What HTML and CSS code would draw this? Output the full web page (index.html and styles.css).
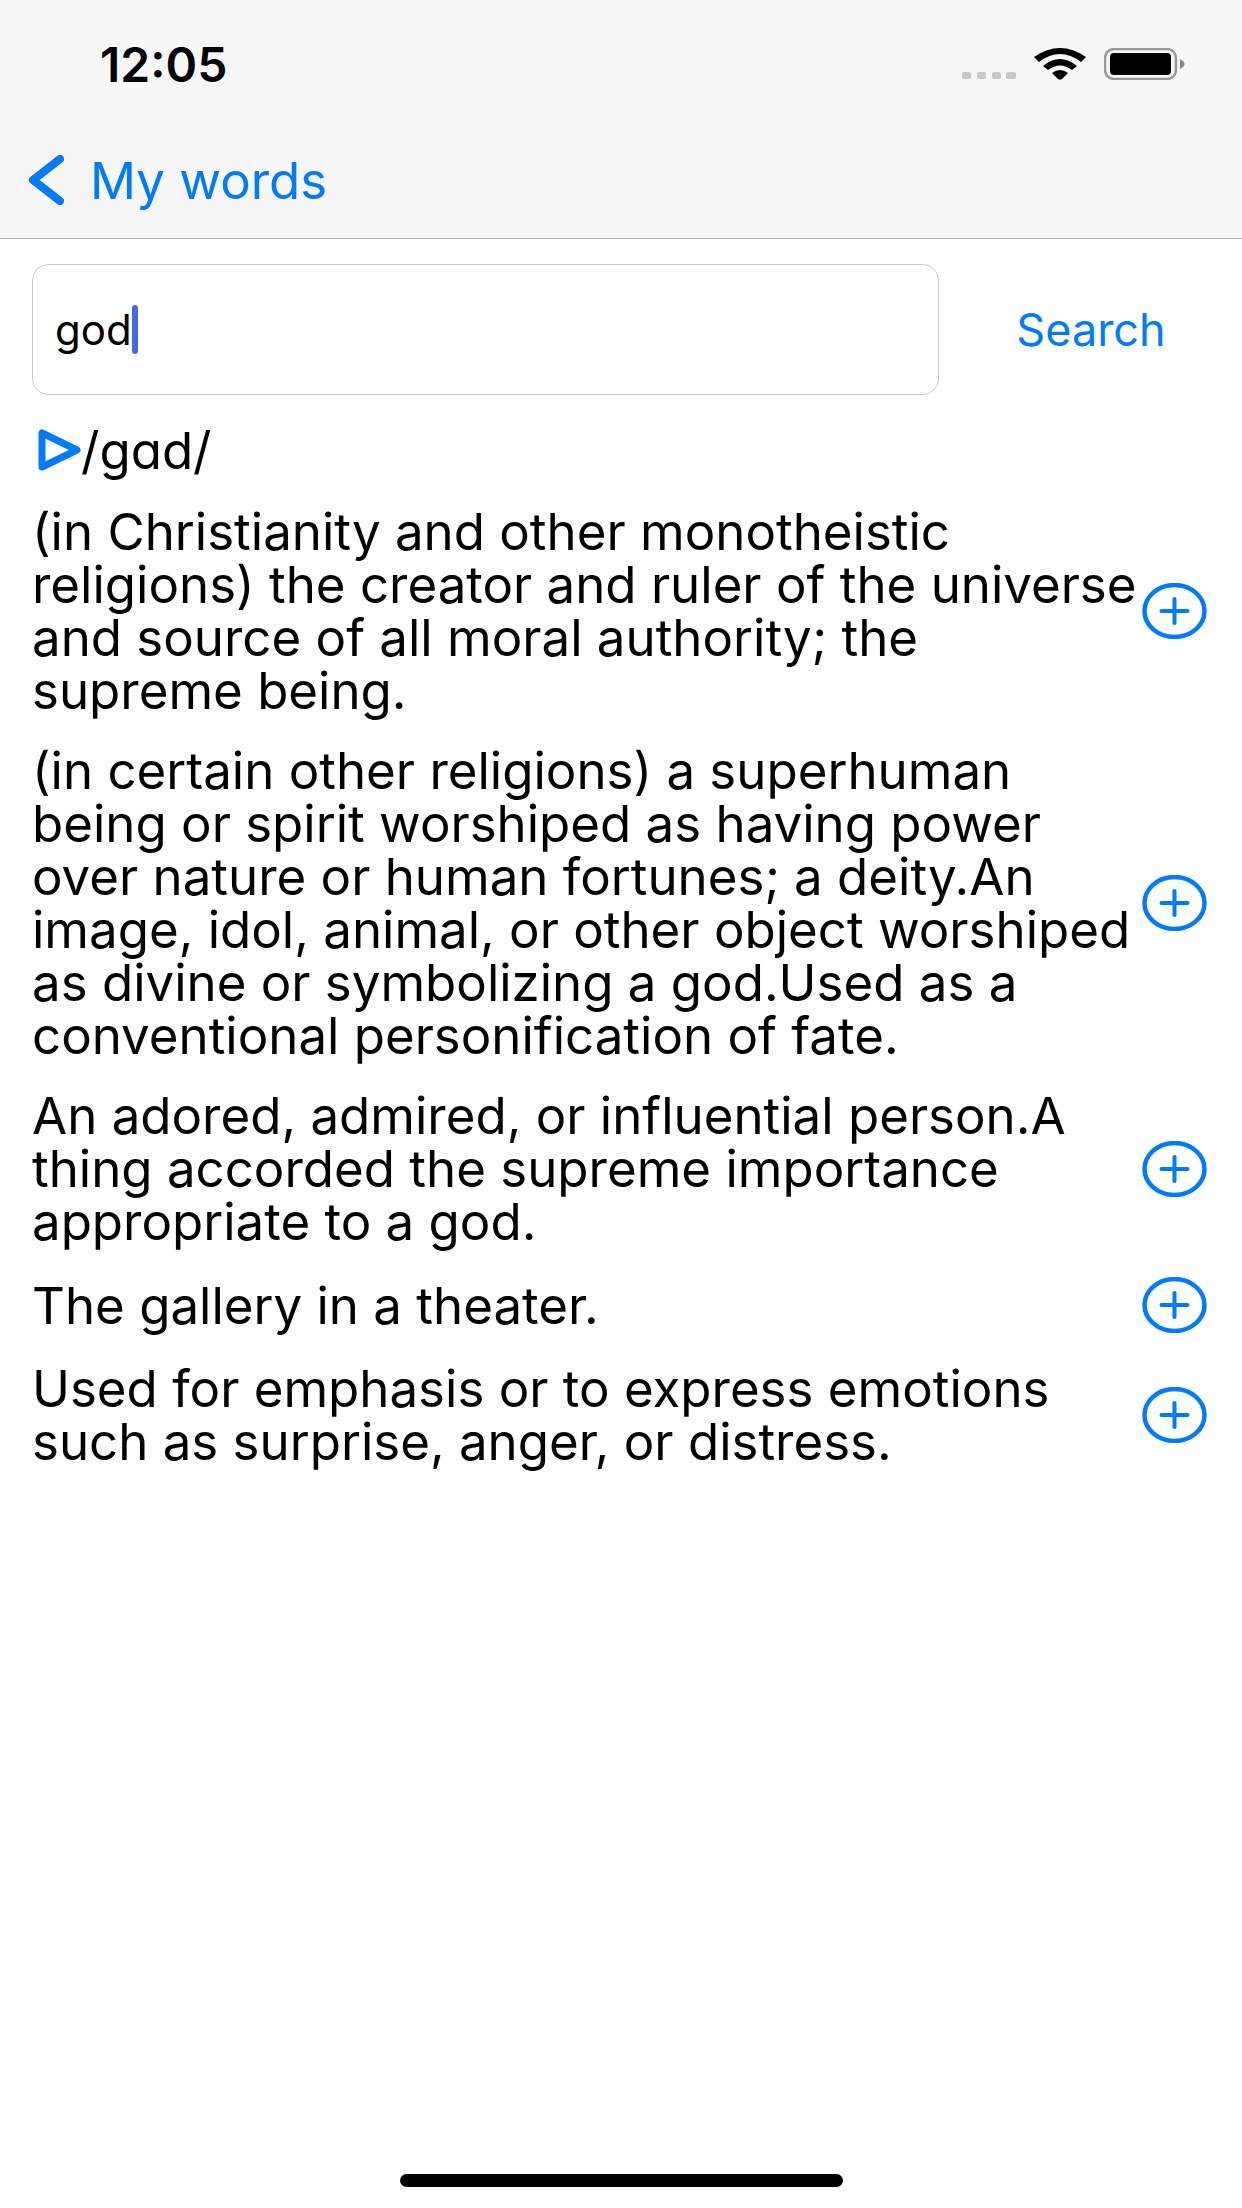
FILE: index.html
```html
<!DOCTYPE html>
<html lang="en">
<head>
<meta charset="utf-8">
<meta name="viewport" content="width=device-width, initial-scale=1">
<title>My words</title>
<link rel="stylesheet" href="styles.css">
</head>
<body>
<svg width="0" height="0" class="defs" aria-hidden="true">
  <symbol id="add" viewBox="0 0 66 56">
    <ellipse cx="32.500" cy="28" rx="30" ry="26" fill="none" stroke="currentColor" stroke-width="4.500"/>
    <path d="M32.500 16v24M19.500 28h26" fill="none" stroke="currentColor" stroke-width="4" stroke-linecap="round"/>
  </symbol>
</svg>
<header class="top">
  <div class="status">
    <time class="clock">12:05</time>
    <div class="indicators">
      <svg class="signal" viewBox="0 0 56 8" aria-hidden="true"><g fill="#c7c7c7"><rect width="9" height="7" x="2" y="1" rx="2"/><rect width="9" height="7" x="17" y="1" rx="2"/><rect width="9" height="7" x="32" y="1" rx="2"/><rect width="10" height="7" x="46" y="1" rx="2"/></g></svg>
      <svg class="wifi" viewBox="0 0 52 32" aria-hidden="true"><path d="M0 9Q26-9 52 9l-5 5Q26-2 5 14zM9 18Q26 4 43 18l-5 4Q26 13 14 22zM18 25Q26 19 34 25L28 31Q26 32 24 31z"/></svg>
      <svg class="battery" viewBox="0 0 81 32" aria-hidden="true"><rect x="1" y="1" width="71" height="30" rx="9" fill="none" stroke="#999" stroke-width="2.500"/><rect x="6" y="5" width="61" height="22" rx="4"/><path d="M76 11q9 5 0 10z" fill="#888"/></svg>
    </div>
  </div>
  <nav class="nav">
    <a class="back" href="#">
      <svg class="chevron" viewBox="0 0 36 50" aria-hidden="true"><path d="M32 4L5 25l27 21" fill="none" stroke="currentColor" stroke-width="8" stroke-linecap="round" stroke-linejoin="round"/></svg>
      <span>My words</span>
    </a>
  </nav>
</header>
<main class="content">
  <form class="search">
    <label class="field"><input class="query" type="text" value="god" aria-label="Word"><span class="caret"></span></label>
    <button class="submit" type="button">Search</button>
  </form>
  <div class="phonetic">
    <button class="play" type="button" aria-label="Play pronunciation"><svg viewBox="0 0 44 42" aria-hidden="true"><path d="M5 4v34L40 21z" fill="none" stroke="currentColor" stroke-width="7" stroke-linejoin="round"/></svg></button>
    <span>/gɑd/</span>
  </div>
  <ul class="senses">
    <li class="sense"><p>(in Christianity and other monotheistic religions) the creator and ruler of the universe and source of all moral authority; the supreme being.</p><button class="add" type="button" aria-label="Add"><svg><use href="#add"/></svg></button></li>
    <li class="sense"><p>(in certain other religions) a superhuman being or spirit worshiped as having power over nature or human fortunes; a deity.An image, idol, animal, or other object worshiped as divine or symbolizing a god.Used as a conventional personification of fate.</p><button class="add" type="button" aria-label="Add"><svg><use href="#add"/></svg></button></li>
    <li class="sense"><p>An adored, admired, or influential person.A thing accorded the supreme importance appropriate to a god.</p><button class="add" type="button" aria-label="Add"><svg><use href="#add"/></svg></button></li>
    <li class="sense"><p>The gallery in a theater.</p><button class="add" type="button" aria-label="Add"><svg><use href="#add"/></svg></button></li>
    <li class="sense"><p>Used for emphasis or to express emotions such as surprise, anger, or distress.</p><button class="add" type="button" aria-label="Add"><svg><use href="#add"/></svg></button></li>
  </ul>
</main>
<footer class="home"><div class="home-bar"></div></footer>
</body>
</html>
```
FILE: styles.css
```css
* { box-sizing: border-box; }
body {
  margin: 0;
  min-height: 100vh;
  display: flex;
  flex-direction: column;
  background: #fff;
  color: #000;
  font-family: Inter, "Liberation Sans", sans-serif;
  font-size: 51px;
  line-height: 53px;
}
button {
  padding: 0;
  border: 0;
  background: none;
  color: #007aff;
  font: inherit;
}
svg { display: block; }
.defs { position: absolute; }
.top { background: #f7f7f7; border-bottom: 1px solid #b2b2b2; }
.status {
  display: flex;
  justify-content: space-between;
  align-items: center;
  height: 128px;
  padding: 0 57px 0 100px;
}
.clock { font-size: 48px; font-weight: 600; }
.indicators { display: flex; align-items: center; gap: 18px; }
.signal { width: 56px; height: 8px; margin-top: 21px; }
.wifi { width: 52px; height: 32px; }
.battery { width: 81px; height: 32px; }
.nav { display: flex; height: 110px; padding: 0 28px 6px; align-items: center; }
.back {
  display: flex;
  align-items: center;
  gap: 26px;
  color: #007aff;
  text-decoration: none;
}
.chevron { width: 36px; height: 50px; }
.content { padding: 25px 34px 0 32px; }
.search { display: flex; }
.field {
  flex: 1;
  display: flex;
  align-items: center;
  height: 131px;
  padding: 0 22px;
  border: 1px solid #ccc;
  border-radius: 16px;
}
.query {
  field-sizing: content;
  padding: 0;
  border: 0;
  outline: 0;
  background: none;
  color: inherit;
  font: inherit;
  font-size: 42px;
}
.caret { width: 6px; height: 49px; border-radius: 3px; background: #4169f0; }
.submit { width: 234px; margin-left: 35px; font-size: 45px; }
.phonetic { display: flex; align-items: center; height: 110px; padding-left: 5px; }
.play svg { width: 44px; height: 42px; }
.senses { margin: 0; padding: 0; list-style: none; }
.sense { display: flex; align-items: center; min-height: 60px; margin-bottom: 27px; }
.sense p { flex: 1; margin: 0; }
.add svg { width: 66px; height: 56px; }
.home { display: flex; justify-content: center; margin-top: auto; padding-bottom: 21px; }
.home-bar { width: 443px; max-width: 60%; height: 13px; border-radius: 8px; background: #000; }
```
